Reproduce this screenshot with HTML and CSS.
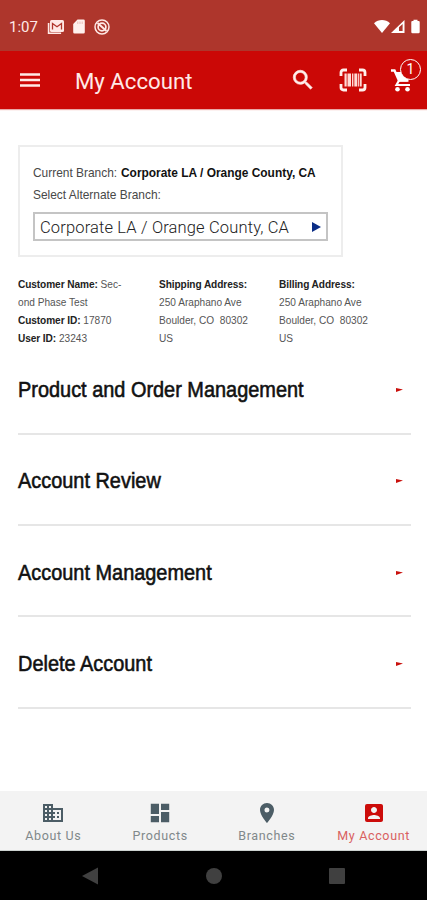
FILE: index.html
```html
<!DOCTYPE html>
<html lang="en">
<head>
<meta charset="utf-8">
<title>My Account</title>
<link rel="stylesheet" href="styles.css">
</head>
<body>
<div class="screen">
  <header class="status">
    <span class="clock">1:07</span>
    <svg class="st-mail" width="18" height="16" viewBox="0 0 18 16"><path d="M1.6 4v10.3h12.5" fill="none" stroke="#ffe9e6" stroke-width="1.6"/><rect x="3" y="1" width="14" height="12" rx="1.5" fill="#ffe9e6"/><path d="M5.500 10.500V4.500l4.500 3.200 4.500-3.200v6" fill="none" stroke="#b0362c" stroke-width="1.300"/></svg>
    <svg class="st-sd" width="12" height="15" viewBox="0 0 12 15"><path d="M4.500.5H10.500a1.300 1.300 0 0 1 1.300 1.300v11.400a1.300 1.300 0 0 1-1.300 1.300H1.500A1.300 1.300 0 0 1 .2 13.200V5z" fill="#fff1ee"/><path d="M4.800 2.500v2.500M7 2.500v2.500M9.200 2.500v2.500" stroke="#e4b0aa" stroke-width=".8"/></svg>
    <svg class="st-sync" width="16" height="16" viewBox="0 0 16 16"><g fill="none" stroke="#ffe9e6"><circle cx="8" cy="8" r="7" stroke-width="1.500"/><circle cx="8" cy="8" r="3.900" stroke-width="1.700"/><path d="M3.500 4l9 8" stroke-width="2"/></g></svg>
    <svg class="st-right" width="48" height="16" viewBox="0 0 48 16"><path d="M0 4.200C4.500-.2 11.500-.2 16 4.200L8 14z" fill="#fff"/><path d="M17 14L30.500 1v13z" fill="#fff"/><path d="M25 12V8.200L28.600 5v7z" fill="#b0362c"/><path d="M39.500 .8h4v1.300h1.200a1 1 0 0 1 1 1V13a1.200 1.200 0 0 1-1.200 1.200h-6A1.200 1.200 0 0 1 37.300 13V3.100a1 1 0 0 1 1-1h1.200z" fill="#fff"/></svg>
  </header>
  <div class="appbar">
    <svg class="menu" width="20" height="16" viewBox="0 0 20 16"><path d="M0 2.500h20M0 8h20M0 13.500h20" stroke="#ffe9e6" stroke-width="2.600"/></svg>
    <h1>My Account</h1>
    <svg class="search" width="26" height="26" viewBox="0 0 24 24"><path fill="#ffefec" stroke="#ffefec" stroke-width=".6" d="M15.500 14h-.79l-.28-.27A6.471 6.471 0 0 0 16 9.500 6.500 6.500 0 1 0 9.500 16c1.610 0 3.090-.59 4.230-1.570l.27.28v.79l5 4.990L20.490 19l-4.990-5zm-6 0C7.010 14 5 11.990 5 9.500S7.010 5 9.500 5 14 7.010 14 9.500 11.990 14 9.500 14z"/></svg>
    <svg class="scan" width="28" height="24" viewBox="0 0 28 24"><path d="M8 2H4.500Q2 2 2 4.500V8M20 2h3.500Q26 2 26 4.500V8M8 22H4.500Q2 22 2 19.500V16M20 22h3.500Q26 22 26 19.500V16" fill="none" stroke="#ffefec" stroke-width="2.800"/><path d="M5.500 5.500h2.200v13H5.500zM8.500 5.500h3.500v13H8.500zM13 5.500h1.400v13H13zM15.300 5.500h3v13h-3zM19.100 5.500h1.200v13h-1.200zM21 5.500h1.700v13H21z" fill="#ffd9d5"/></svg>
    <div class="cart">
      <svg width="24" height="26" viewBox="0 0 24 26"><path d="M1 3.500h3.500L9 13.500h9.500" fill="none" stroke="#fff" stroke-width="2.400"/><path d="M5 5h16l-3.500 9.500H9z" fill="#fff"/><path d="M9 13.500L6.500 18H20" fill="none" stroke="#fff" stroke-width="2.200"/><circle cx="7.500" cy="22.300" r="2.300" fill="#fff"/><circle cx="17.500" cy="22.300" r="2.300" fill="#fff"/></svg>
      <span class="count">1</span>
    </div>
  </div>
  <main>
    <section class="branch">
      <p class="line"><span class="n13">Current Branch:</span></p>
      <p class="line"><span class="n13">Select Alternate Branch:</span></p>
      <strong class="current">Corporate LA / Orange County, CA</strong>
      <div class="select"><span>Corporate LA / Orange County, CA</span><svg width="9" height="10" viewBox="0 0 9 10"><path d="M0 0l9 5-9 5z" fill="#0b2d86"/></svg></div>
    </section>
    <section class="info">
      <div class="c1"><p><b>Customer Name:</b> Sec-</p><p>ond Phase Test</p><p><b>Customer ID:</b> 17870</p><p><b>User ID:</b> 23243</p></div>
      <div class="c2"><p><b>Shipping Address:</b></p><p>250 Araphano Ave</p><p>Boulder, CO &nbsp;80302</p><p>US</p></div>
      <div class="c3"><p><b>Billing Address:</b></p><p>250 Araphano Ave</p><p>Boulder, CO &nbsp;80302</p><p>US</p></div>
    </section>
    <section class="list">
      <div class="row"><h2>Product and Order Management</h2><svg width="7" height="4" viewBox="0 0 7 4"><path d="M0 0l7 1.500L0 4z" fill="#c9100c"/></svg></div>
      <div class="row"><h2>Account Review</h2><svg width="7" height="4" viewBox="0 0 7 4"><path d="M0 0l7 1.500L0 4z" fill="#c9100c"/></svg></div>
      <div class="row"><h2>Account Management</h2><svg width="7" height="4" viewBox="0 0 7 4"><path d="M0 0l7 1.500L0 4z" fill="#c9100c"/></svg></div>
      <div class="row"><h2>Delete Account</h2><svg width="7" height="4" viewBox="0 0 7 4"><path d="M0 0l7 1.500L0 4z" fill="#c9100c"/></svg></div>
    </section>
  </main>
  <nav class="tabs">
    <div class="tab"><svg width="24" height="24" viewBox="0 0 24 24"><path fill="#4c5d66" d="M12 7V3H2v18h20V7H12zM6 19H4v-2h2v2zm0-4H4v-2h2v2zm0-4H4V9h2v2zm0-4H4V5h2v2zm4 12H8v-2h2v2zm0-4H8v-2h2v2zm0-4H8V9h2v2zm0-4H8V5h2v2zm10 12h-8v-2h2v-2h-2v-2h2v-2h-2V9h8v10zm-2-8h-2v2h2v-2zm0 4h-2v2h2v-2z"/></svg><span>About Us</span></div>
    <div class="tab"><svg width="24" height="24" viewBox="0 0 24 24"><path fill="#4c5d66" d="M2.800 2.800h8.200v10.200H2.800zM13 2.800h8.200v6.200H13zM2.800 15H11v6.200H2.800zM13 11h8.200v10.200H13z"/></svg><span>Products</span></div>
    <div class="tab"><svg width="24" height="24" viewBox="0 0 24 24"><path fill="#4c5d66" d="M12 2C8.130 2 5 5.130 5 9c0 5.250 7 13 7 13s7-7.750 7-13c0-3.870-3.130-7-7-7zm0 9.500a2.500 2.500 0 1 1 0-5 2.500 2.500 0 0 1 0 5z"/></svg><span>Branches</span></div>
    <div class="tab on"><svg width="24" height="24" viewBox="0 0 24 24"><path fill="#cc0c0a" d="M3 5v14a2 2 0 0 0 2 2h14c1.100 0 2-.9 2-2V5c0-1.100-.9-2-2-2H5a2 2 0 0 0-2 2zm12 4c0 1.660-1.340 3-3 3s-3-1.340-3-3 1.340-3 3-3 3 1.340 3 3zm-9 8c0-2 4-3.100 6-3.100s6 1.100 6 3.100v1H6v-1z"/></svg><span>My Account</span></div>
  </nav>
  <footer class="system">
    <svg width="17" height="18" viewBox="0 0 17 18"><path d="M0 9L16 .5v17z" fill="#404040"/></svg>
    <svg width="16" height="16" viewBox="0 0 16 16"><circle cx="8" cy="8" r="8" fill="#404040"/></svg>
    <svg width="16" height="16" viewBox="0 0 16 16"><rect width="16" height="16" rx="1" fill="#404040"/></svg>
  </footer>
</div>
</body>
</html>
```
FILE: styles.css
```css
* { box-sizing: border-box; }
body, h1, h2, p { margin: 0; font-weight: 400; }
body { font-family: "Liberation Sans", sans-serif; background: #fff; }
svg { display: block; flex: none; }
.screen { width: 427px; height: 900px; display: flex; flex-direction: column; overflow: hidden; }

.status { height: 51px; background: #ae362c; display: flex; align-items: center; padding: 2px 5px 0 9px; }
.clock { font: 400 15px Roboto, sans-serif; color: #ffe9e6; width: 38px; white-space: nowrap; }
.st-sd { margin-left: 8px; }
.st-sync { margin-left: 9px; }
.st-right { margin-left: auto; }

.appbar { height: 58px; background: #cb0806; display: flex; align-items: center; padding: 0 3px 0 20px; box-shadow: 0 1px 1px #e9a9a7; }
.appbar h1 { font: 400 22.200px/26px Roboto, sans-serif; color: #ffe9e6; margin: 2px 0 0 35px; white-space: nowrap; }
.search { margin-left: auto; }
.scan { margin-left: 23px; }
.cart { position: relative; width: 34px; margin-left: 23px; }
.count { position: absolute; left: 10px; top: -8px; width: 21px; height: 21px; border: 1.500px solid #fff; border-radius: 50%; background: #cb0806; color: #fff; font: 14px/19px Roboto, sans-serif; text-align: center; }

main { flex: 1; padding: 36px 16px 0 18px; }
.branch { position: relative; width: 325px; height: 112px; border: 2px solid #ededed; padding: 14px 13px 0; }
.line { height: 22px; line-height: 22px; }
.n13 { display: inline-block; font-size: 13px; color: #484848; transform: scaleX(.917); transform-origin: 0 50%; white-space: nowrap; }
.current { position: absolute; left: 101px; top: 14px; font-size: 13px; line-height: 23px; color: #111; transform: scaleX(.917); transform-origin: 0 50%; white-space: nowrap; }
.select { margin-top: 7px; width: 295px; height: 29px; border: 2px solid #c4c4c4; display: flex; align-items: center; justify-content: space-between; padding: 1px 5px 0 5px; font: 300 16.500px Roboto, sans-serif; letter-spacing: .15px; color: #222; white-space: nowrap; }

.info { display: flex; margin-top: 19px; height: 67.500px; font-size: 11px; line-height: 17.900px; color: #555; white-space: nowrap; }
.info b { color: #222; letter-spacing: -.1px; }
.info p { transform: scaleX(.92); transform-origin: 0 50%; }
.c1 { width: 141px; }
.c2 { width: 120px; }

.row { height: 91.300px; border-bottom: 2px solid #e6e6e6; display: flex; align-items: center; justify-content: space-between; padding: 4px 8px 0 0; }
.row h2 { font-size: 22.500px; color: #111; -webkit-text-stroke: .6px #111; transform: scaleX(.885); transform-origin: 0 50%; white-space: nowrap; }

.tabs { height: 60px; background: #f3f3f3; display: flex; border-bottom: 1px solid #ccd2d0; }
.tab { flex: 1; display: flex; flex-direction: column; align-items: center; padding-top: 10px; color: #80888a; font: 400 12.500px/16px Roboto, sans-serif; letter-spacing: .65px; white-space: nowrap; }
.tab span { margin-top: 3px; }
.tab.on { color: #d95f60; }

.system { height: 49px; background: #000; display: flex; align-items: center; justify-content: center; gap: 107px; }
```
